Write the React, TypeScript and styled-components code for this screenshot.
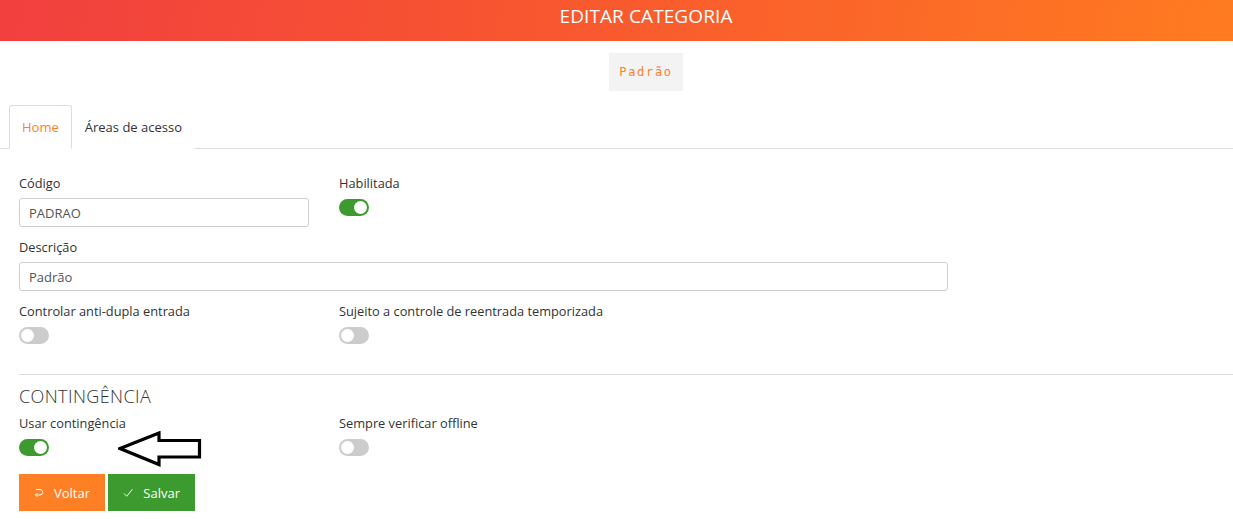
import React from 'react';
import styled, { createGlobalStyle } from 'styled-components';

const GlobalStyle = createGlobalStyle`
  html, body {
    margin: 0;
    padding: 0;
    background: #ffffff;
    font-family: "Open Sans", "Liberation Sans", sans-serif;
    color: #333;
    overflow: hidden;
  }
`;

const Page = styled.div`
  width: 1233px;
  min-height: 519px;
`;

const Header = styled.header`
  height: 41px;
  background: linear-gradient(100deg, #f13f3f 0%, #f8572f 45%, #ff7b20 100%);
  display: flex;
  align-items: center;
  justify-content: center;
  padding-left: 59px;
`;

const HeaderTitle = styled.h1`
  margin: 0 0 9px 0;
  font-size: 19px;
  font-weight: 400;
  color: #fff;
  letter-spacing: 0.1px;
`;

const BadgeRow = styled.div`
  display: flex;
  justify-content: center;
  padding-left: 59px;
  margin-top: 12px;
`;

const Badge = styled.div`
  height: 38px;
  padding: 0 10px;
  background: #f3f3f3;
  color: #ff7f27;
  font-family: "DejaVu Sans Mono", "Liberation Mono", monospace;
  font-size: 12px;
  letter-spacing: 1.7px;
  display: flex;
  align-items: center;
`;

const Tabs = styled.div`
  display: flex;
  margin-top: 14px;
  padding-left: 9px;
  border-bottom: 1px solid #dddddd;
  height: 43px;
`;

const Tab = styled.div<{ $active?: boolean }>`
  height: 44px;
  box-sizing: border-box;
  padding: 0 12px;
  display: flex;
  align-items: center;
  font-size: 13px;
  color: ${p => (p.$active ? '#ff7f27' : '#333')};
  border: 1px solid ${p => (p.$active ? '#dddddd' : 'transparent')};
  border-bottom-color: ${p => (p.$active ? '#fff' : 'transparent')};
  border-radius: 3px 3px 0 0;
  background: #fff;
  margin-bottom: -1px;
`;

const Form = styled.div`
  padding: 25px 0 0 19px;
  display: flex;
  flex-direction: column;
`;

const Row = styled.div<{ $gap?: number }>`
  display: grid;
  grid-template-columns: 320px 320px;
  margin-bottom: ${p => p.$gap ?? 11}px;
  position: relative;
`;

const WideRow = styled.div`
  margin-bottom: 11px;
`;

const Field = styled.div`
  display: flex;
  flex-direction: column;
`;

const Label = styled.label`
  font-size: 12.8px;
  line-height: 18px;
  color: #333;
  margin-bottom: 6px;
`;

const Input = styled.input<{ $width: number }>`
  width: ${p => p.$width}px;
  height: 29px;
  box-sizing: border-box;
  border: 1px solid #cfcfcf;
  border-radius: 3px;
  padding: 0 9px;
  font-family: "Open Sans", "Liberation Sans", sans-serif;
  font-size: 13px;
  color: #555;
  outline: none;
`;

const Toggle = styled.span<{ $on?: boolean }>`
  position: relative;
  display: block;
  width: 30px;
  height: 17px;
  margin-top: 1px;
  border-radius: 9px;
  background: ${p => (p.$on ? '#3d9a2f' : '#cccccc')};

  &::after {
    content: '';
    position: absolute;
    top: 2px;
    left: ${p => (p.$on ? '15px' : '2px')};
    width: 13px;
    height: 13px;
    border-radius: 50%;
    background: #fff;
  }
`;

const Divider = styled.hr`
  border: none;
  border-top: 1px solid #dddddd;
  margin: 0;
`;

const SectionTitle = styled.h2`
  margin: 10px 0 7px 0;
  font-size: 18px;
  line-height: 22px;
  font-weight: 300;
  color: #333;
  letter-spacing: 0.4px;
`;

const Annotation = styled.svg`
  position: absolute;
  left: 99px;
  top: 17px;
`;

const Actions = styled.div`
  display: flex;
  gap: 3px;
`;

const Button = styled.button<{ $variant: 'orange' | 'green' }>`
  height: 37px;
  border: none;
  border-radius: 0;
  padding: 0 15px;
  display: flex;
  align-items: center;
  gap: 10px;
  font-family: "Open Sans", "Liberation Sans", sans-serif;
  font-size: 13px;
  color: #fff;
  background: ${p => (p.$variant === 'orange' ? '#ff7f24' : '#3d9a2f')};
  width: ${p => (p.$variant === 'orange' ? '86px' : '87px')};
  cursor: pointer;
`;

const ReturnIcon = () => (
  <svg width="10" height="11" viewBox="0 0 10 11" fill="none" stroke="#fff" strokeWidth="1">
    <path d="M2 2.5 H6 A2.75 2.75 0 0 1 6 8 H1.5" />
    <path d="M3.5 6 L1.5 8 L3.5 10" />
  </svg>
);

const CheckIcon = () => (
  <svg width="11" height="10" viewBox="0 0 11 10" fill="none" stroke="#fff" strokeWidth="1">
    <path d="M1 5.5 L4 8.5 L10 1" />
  </svg>
);

export default function App() {
  return (
    <Page>
      <GlobalStyle />
      <Header>
        <HeaderTitle>EDITAR CATEGORIA</HeaderTitle>
      </Header>
      <BadgeRow>
        <Badge>Padrão</Badge>
      </BadgeRow>
      <Tabs>
        <Tab $active>Home</Tab>
        <Tab>Áreas de acesso</Tab>
      </Tabs>
      <Form>
        <Row>
          <Field>
            <Label>Código</Label>
            <Input $width={290} defaultValue="PADRAO" />
          </Field>
          <Field>
            <Label>Habilitada</Label>
            <Toggle $on />
          </Field>
        </Row>
        <WideRow>
          <Field>
            <Label>Descrição</Label>
            <Input $width={929} defaultValue="Padrão" />
          </Field>
        </WideRow>
        <Row $gap={30}>
          <Field>
            <Label>Controlar anti-dupla entrada</Label>
            <Toggle />
          </Field>
          <Field>
            <Label>Sujeito a controle de reentrada temporizada</Label>
            <Toggle />
          </Field>
        </Row>
        <Divider />
        <SectionTitle>CONTINGÊNCIA</SectionTitle>
        <Row $gap={18}>
          <Field>
            <Label>Usar contingência</Label>
            <Toggle $on />
          </Field>
          <Field>
            <Label>Sempre verificar offline</Label>
            <Toggle />
          </Field>
          <Annotation width="84" height="36" viewBox="0 0 84 36">
            <path
              d="M2 17.5 L41 2 L41 9.5 L81.5 9.5 L81.5 26 L41 26 L41 33.5 Z"
              fill="none"
              stroke="#000"
              strokeWidth="3.2"
              strokeLinejoin="miter"
            />
          </Annotation>
        </Row>
        <Actions>
          <Button $variant="orange">
            <ReturnIcon />
            Voltar
          </Button>
          <Button $variant="green">
            <CheckIcon />
            Salvar
          </Button>
        </Actions>
      </Form>
    </Page>
  );
}
